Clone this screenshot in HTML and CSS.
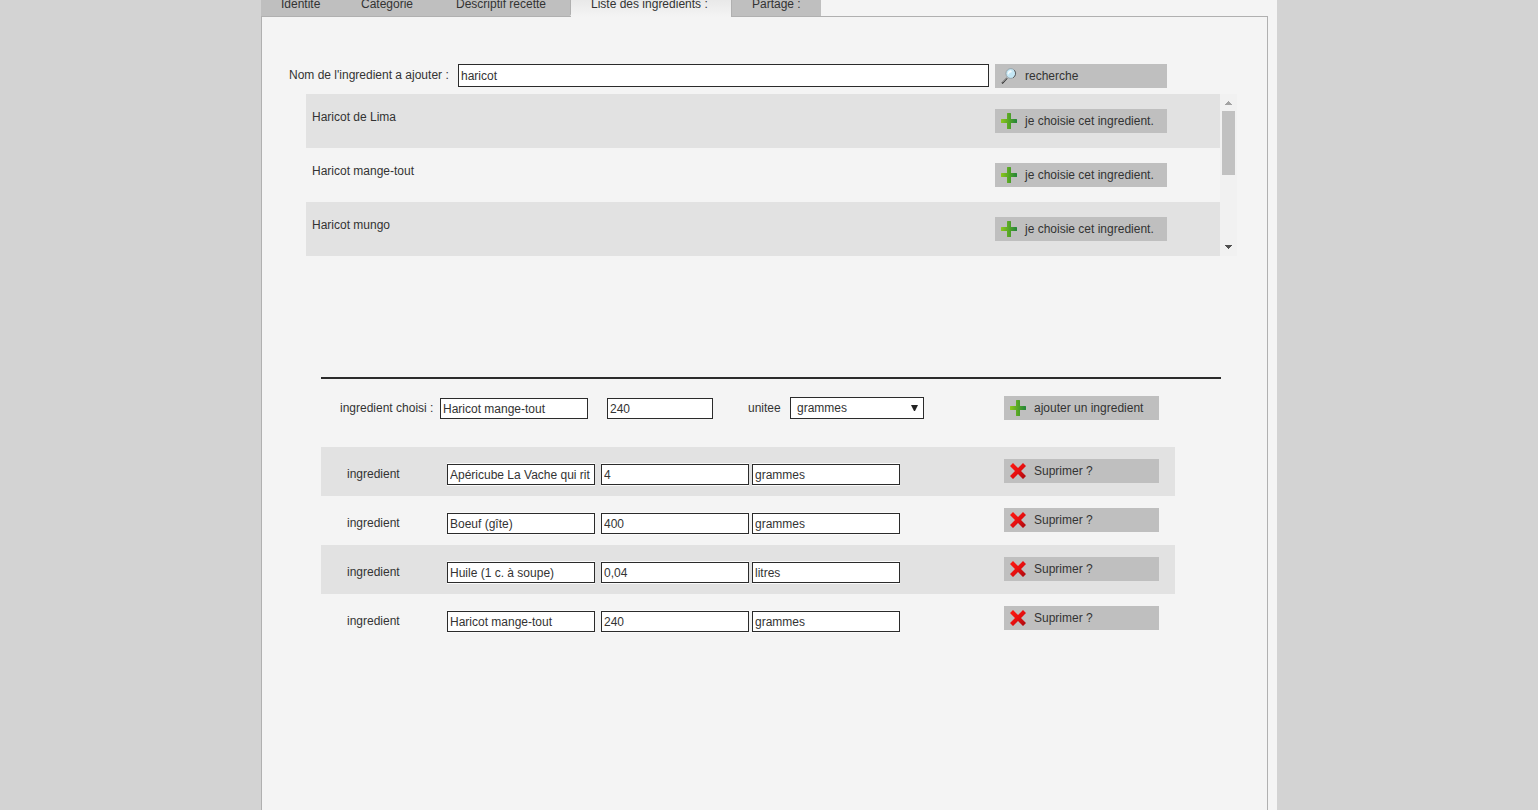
FILE: index.html
```html
<!DOCTYPE html>
<html lang="fr">
<head>
<meta charset="utf-8">
<title>Liste des ingredients</title>
<link rel="stylesheet" href="styles.css">
</head>
<body>
<svg class="defs" aria-hidden="true">
  <defs>
    <linearGradient id="green" x1="0" y1="0" x2="1" y2="0">
      <stop offset="0" stop-color="#8cc71d"/>
      <stop offset="0.5" stop-color="#55a526"/>
      <stop offset="1" stop-color="#22843a"/>
    </linearGradient>
    <linearGradient id="red" x1="0" y1="0" x2="1" y2="1">
      <stop offset="0" stop-color="#ff1a12"/>
      <stop offset="0.5" stop-color="#e80f0f"/>
      <stop offset="1" stop-color="#a30a10"/>
    </linearGradient>
    <symbol id="plus" viewBox="0 0 16 16">
      <path fill="url(#green)" d="M6.6 0h2.8q.6 0 .6.6V6h5.4q.6 0 .6.6v2.8q0 .6-.6.6H10v5.4q0 .6-.6.6H6.6q-.6 0-.6-.6V10H.6Q0 10 0 9.400V6.600Q0 6 .6 6H6V.6Q6 0 6.600 0z"/>
    </symbol>
    <symbol id="cross" viewBox="0 0 16 16">
      <path fill="url(#red)" d="M0 3 3 0 8 5 13 0 16 3 11 8 16 13 13 16 8 11 3 16 0 13 5 8z"/>
    </symbol>
    <symbol id="glass" viewBox="0 0 16 16">
      <path d="M1 15.400 6 10" stroke="#333" stroke-width="1.800"/>
      <path d="M1.200 14.500 6 9.500" stroke="#ddd" stroke-width="0.800"/>
      <circle cx="9.800" cy="5.500" r="4.900" fill="#c5e7f5" stroke="#8d979d" stroke-width="0.800"/>
      <path d="M13.300 2.200A4.900 4.900 0 0 1 12 9.800" fill="none" stroke="#555" stroke-width="0.900"/>
      <path d="M6.500 5.500Q7 2.500 10 2.200L11 4Q8 4.500 7 7z" fill="#f4fcff"/>
    </symbol>
  </defs>
</svg>
<div class="page">
  <nav class="tabs">
    <a class="tab tab-short" href="#identite">Identite</a>
    <a class="tab tab-medium" href="#categorie">Categorie</a>
    <a class="tab tab-long tab-edge" href="#descriptif">Descriptif recette</a>
    <a class="tab tab-active" href="#ingredients">Liste des ingredients :</a>
    <a class="tab tab-last" href="#partage">Partage :</a>
  </nav>
  <main class="panel" id="ingredients">
    <form class="search">
      <label for="nom">Nom de l'ingredient a ajouter :</label>
      <input class="field field-search" id="nom" type="text" value="haricot">
      <button class="btn btn-wide" type="button"><svg class="icon"><use href="#glass"/></svg>recherche</button>
    </form>
    <div class="results">
      <ul class="result-list">
        <li class="result"><span>Haricot de Lima</span><button class="btn btn-wide" type="button"><svg class="icon"><use href="#plus"/></svg>je choisie cet ingredient.</button></li>
        <li class="result"><span>Haricot mange-tout</span><button class="btn btn-wide" type="button"><svg class="icon"><use href="#plus"/></svg>je choisie cet ingredient.</button></li>
        <li class="result"><span>Haricot mungo</span><button class="btn btn-wide" type="button"><svg class="icon"><use href="#plus"/></svg>je choisie cet ingredient.</button></li>
      </ul>
      <div class="scrollbar" aria-hidden="true">
        <svg class="arrow" viewBox="0 0 7 4"><path fill="#a3a3a3" d="M3 0h1v1h1v1h1v1h1v1H0V3h1V2h1V1h1z"/></svg>
        <div class="thumb"></div>
        <svg class="arrow arrow-down" viewBox="0 0 7 4"><path fill="#505050" d="M0 0h7v1H6v1H5v1H4v1H3V3H2V2H1V1H0z"/></svg>
      </div>
    </div>
    <hr class="rule">
    <form class="chosen">
      <label class="label-choice" for="choisi">ingredient choisi :</label>
      <input class="field" id="choisi" type="text" value="Haricot mange-tout">
      <input class="field field-qty" type="text" value="240" aria-label="quantite">
      <label class="label-unit" for="unitee">unitee</label>
      <span class="select-box">
        <select class="select" id="unitee"><option>grammes</option><option>litres</option></select>
        <svg class="select-arrow" viewBox="0 0 7 6" aria-hidden="true"><path fill="#222" d="M0 0h7L4 6H3z"/></svg>
      </span>
      <button class="btn btn-action" type="button"><svg class="icon"><use href="#plus"/></svg>ajouter un ingredient</button>
    </form>
    <ul class="items">
      <li class="item">
        <label for="i1">ingredient</label>
        <input class="field" id="i1" type="text" value="Apéricube La Vache qui rit">
        <input class="field" type="text" value="4" aria-label="quantite">
        <input class="field" type="text" value="grammes" aria-label="unitee">
        <button class="btn btn-action" type="button"><svg class="icon"><use href="#cross"/></svg>Suprimer ?</button>
      </li>
      <li class="item">
        <label for="i2">ingredient</label>
        <input class="field" id="i2" type="text" value="Boeuf (gîte)">
        <input class="field" type="text" value="400" aria-label="quantite">
        <input class="field" type="text" value="grammes" aria-label="unitee">
        <button class="btn btn-action" type="button"><svg class="icon"><use href="#cross"/></svg>Suprimer ?</button>
      </li>
      <li class="item">
        <label for="i3">ingredient</label>
        <input class="field" id="i3" type="text" value="Huile (1 c. à soupe)">
        <input class="field" type="text" value="0,04" aria-label="quantite">
        <input class="field" type="text" value="litres" aria-label="unitee">
        <button class="btn btn-action" type="button"><svg class="icon"><use href="#cross"/></svg>Suprimer ?</button>
      </li>
      <li class="item">
        <label for="i4">ingredient</label>
        <input class="field" id="i4" type="text" value="Haricot mange-tout">
        <input class="field" type="text" value="240" aria-label="quantite">
        <input class="field" type="text" value="grammes" aria-label="unitee">
        <button class="btn btn-action" type="button"><svg class="icon"><use href="#cross"/></svg>Suprimer ?</button>
      </li>
    </ul>
  </main>
</div>
</body>
</html>
```

FILE: styles.css
```css
* {
  box-sizing: border-box;
}

body {
  margin: 0;
  background: #d3d3d3;
  color: #333;
  font: 12px/16px "Liberation Sans", Arial, sans-serif;
}

.defs {
  position: absolute;
  width: 0;
  height: 0;
}

.page {
  display: flex;
  flex-direction: column;
  max-width: 1016px;
  min-height: 100vh;
  margin: 0 auto;
  padding-right: 9px;
  background: #f4f4f4;
}

/* Tabs */
.tabs {
  display: flex;
  align-items: flex-end;
  height: 16px;
}

.tab {
  min-width: 90px;
  padding: 12px 0 4px 20px;
  background: #bfbfbf;
  color: #333;
  text-decoration: none;
  white-space: nowrap;
}

.tab-short {
  min-width: 80px;
}

.tab-medium {
  min-width: 95px;
}

.tab-long {
  min-width: 135px;
}

.tab-edge {
  border-right: 1px solid #b0b0b0;
  border-bottom-right-radius: 2px;
}

.tab-active {
  position: relative;
  min-width: 160px;
  margin-bottom: -1px;
  padding-bottom: 5px;
  background: linear-gradient(#dedede, #f4f4f4);
}

.tab-last {
  border-left: 1px solid #b0b0b0;
}

/* Panel */
.panel {
  flex: 1;
  padding-top: 47px;
  border: 1px solid #b0b0b0;
  border-bottom: 0;
}

.field {
  width: 148px;
  height: 21px;
  padding: 1px 2px 0;
  border: 1px solid #2b2b2b;
  border-radius: 0;
  background: #fff;
  color: #333;
  font: inherit;
}

.btn {
  display: flex;
  align-items: center;
  gap: 8px;
  height: 24px;
  padding: 0 6px;
  border: 0;
  background: #bfbfbf;
  color: #333;
  font: inherit;
  white-space: nowrap;
}

.btn-wide {
  width: 172px;
}

.btn-action {
  width: 155px;
}

.icon {
  flex: none;
  width: 16px;
  height: 16px;
}

/* Search */
.search {
  display: flex;
  gap: 6px;
  margin: 0 100px 6px 27px;
}

.search label {
  min-width: 163px;
  padding-top: 3px;
}

.field-search {
  flex: 1;
  min-width: 0;
  height: 23px;
}

.results {
  display: flex;
  margin: 0 30px 0 44px;
}

.result-list {
  flex: 1;
  margin: 0;
  padding: 0;
  list-style: none;
}

.result {
  display: flex;
  align-items: flex-start;
  justify-content: space-between;
  padding: 15px 53px 15px 6px;
}

.result:nth-child(odd),
.item:nth-child(odd) {
  background: #e2e2e2;
}

.scrollbar {
  display: flex;
  flex-direction: column;
  align-items: center;
  width: 17px;
  padding: 7px 2px;
  background: #f1f1f1;
}

.arrow {
  width: 7px;
  height: 4px;
}

.arrow-down {
  margin-top: auto;
}

.thumb {
  width: 13px;
  height: 64px;
  margin-top: 6px;
  background: #c1c1c1;
}

.rule {
  height: 2px;
  margin: 121px 46px 17px 59px;
  border: 0;
  background: #2b2b2b;
}

/* Chosen ingredient */
.chosen {
  display: flex;
  align-items: center;
  margin: 0 108px 27px 78px;
}

.label-choice {
  min-width: 100px;
}

.field-qty {
  width: 106px;
  margin-left: 19px;
}

.label-unit {
  min-width: 42px;
  margin-left: 35px;
}

.select-box {
  display: grid;
  align-items: center;
  width: 134px;
}

.select {
  grid-area: 1 / 1;
  height: 22px;
  padding: 0 6px;
  border: 1px solid #2b2b2b;
  border-radius: 0;
  appearance: none;
  background: #fff;
  color: #333;
  font: inherit;
}

.select-arrow {
  grid-area: 1 / 1;
  justify-self: end;
  z-index: 1;
  width: 7px;
  height: 6px;
  margin-right: 6px;
  pointer-events: none;
}

.chosen .btn {
  margin-left: auto;
}

/* Ingredient rows */
.items {
  margin: 0 92px 0 59px;
  padding: 0;
  list-style: none;
}

.item {
  display: grid;
  grid-template-columns: 100px 154px 151px 1fr 155px;
  align-items: start;
  padding: 12px 16px 11px 26px;
}

.item label {
  margin-top: 7px;
}

.item .field {
  margin-top: 5px;
  box-shadow: 0 1px #fafafa, 0 -1px #fafafa;
}
```
